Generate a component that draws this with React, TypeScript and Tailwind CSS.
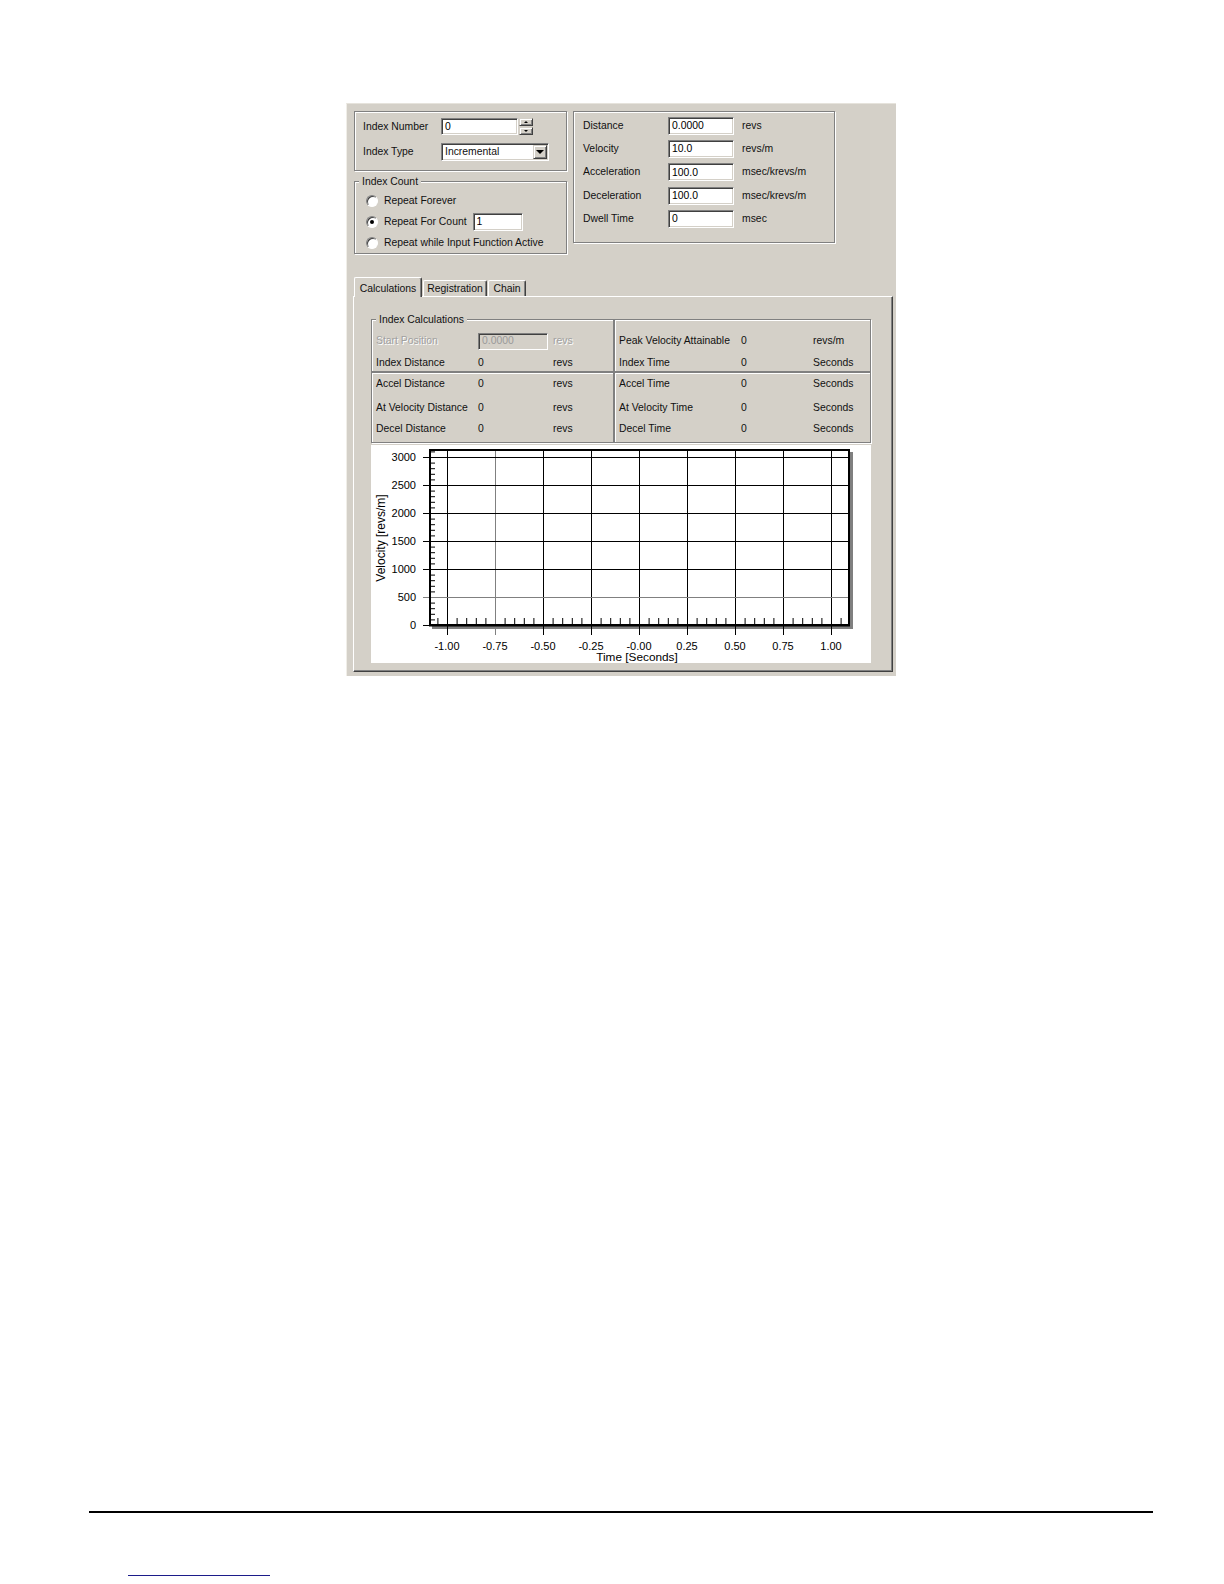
import React from 'react';

const etched =
  'border border-[#808080] shadow-[inset_1px_1px_0_#ffffff,1px_1px_0_#ffffff]';
const sunken =
  'border border-[#808080] border-r-white border-b-white shadow-[inset_1px_1px_0_#404040,inset_-1px_-1px_0_#d4d0c8]';
const raised =
  'border border-[#d4d0c8] border-r-[#404040] border-b-[#404040] shadow-[inset_1px_1px_0_#ffffff,inset_-1px_-1px_0_#808080]';

const TextBox: React.FC<{ value: string; className?: string; disabled?: boolean }> = ({
  value,
  className = '',
  disabled,
}) => (
  <div
    className={`flex items-center pl-[3px] pt-[1px] leading-none ${sunken} ${
      disabled ? 'bg-[#d4d0c8] text-[#9a9a9a]' : 'bg-white text-black'
    } ${className}`}
  >
    {value}
  </div>
);

const Radio: React.FC<{ checked?: boolean; label: string }> = ({ checked, label }) => (
  <div className="flex h-[21px] items-center">
    <span className="ml-[11px] flex h-[12px] w-[12px] shrink-0 items-center justify-center rounded-full border border-[#808080] border-r-white border-b-white bg-white shadow-[inset_1px_1px_0_#404040]">
      {checked && <span className="h-[4px] w-[4px] rounded-full bg-black" />}
    </span>
    <span className="ml-[6px]">{label}</span>
  </div>
);

const Cell: React.FC<{
  rows: { label: string; value: string; unit: string; disabled?: boolean; mt: string }[];
  cols: [string, string];
  className: string;
  title?: string;
}> = ({ rows, cols, className, title }) => (
  <div className={`relative ${etched} ${className}`}>
    {title && (
      <span className="absolute -top-[7px] left-[4px] bg-[#d4d0c8] px-[3px] leading-[13px]">
        {title}
      </span>
    )}
    {rows.map(r => (
      <div key={r.label} className={`flex h-[16px] items-center pl-[4px] ${r.mt}`}>
        <span className={`${cols[0]} ${r.disabled ? 'text-[#a0a0a0] [text-shadow:1px_1px_0_#ffffff]' : ''}`}>
          {r.label}
        </span>
        {r.disabled ? (
          <TextBox value={r.value} disabled className="h-[17px] w-[70px]" />
        ) : (
          <span className={cols[1]}>{r.value}</span>
        )}
        <span
          className={`${r.disabled ? 'ml-[5px] text-[#a0a0a0] [text-shadow:1px_1px_0_#ffffff]' : ''}`}
        >
          {r.unit}
        </span>
      </div>
    ))}
  </div>
);

const Chart = () => {
  const xPos = (v: number) => 268 + v * 192;
  const yPos = (v: number) => 180 - (v / 500) * 28;
  const xVals = [-1, -0.75, -0.5, -0.25, 0, 0.25, 0.5, 0.75, 1];
  const xLabels = ['-1.00', '-0.75', '-0.50', '-0.25', '-0.00', '0.25', '0.50', '0.75', '1.00'];
  const yVals = [0, 500, 1000, 1500, 2000, 2500, 3000];
  const minorX: number[] = [];
  for (let k = -1; k <= 41; k++) if (k % 5 !== 0) minorX.push(76 + k * 9.6);
  const minorY: number[] = [];
  for (let j = 1; j <= 31; j++) if (j % 5 !== 0) minorY.push(180 - j * 5.6);

  return (
    <svg width="500" height="218" viewBox="0 0 500 218" className="block">
      <rect x="0" y="0" width="500" height="218" fill="#ffffff" />
      <rect x="61" y="7" width="421" height="177" fill="#808080" />
      <rect x="58" y="4" width="421" height="176" fill="#ffffff" />
      {xVals.map(v => (
        <line
          key={`gx${v}`}
          x1={xPos(v) + 0.5}
          x2={xPos(v) + 0.5}
          y1="4"
          y2="190"
          stroke={v === -0.75 ? '#808080' : '#000000'}
          strokeWidth="1"
        />
      ))}
      {yVals.map(v => (
        <line
          key={`gy${v}`}
          x1="52"
          x2="479"
          y1={yPos(v) + 0.5}
          y2={yPos(v) + 0.5}
          stroke={v === 500 ? '#808080' : '#000000'}
          strokeWidth="1"
        />
      ))}
      {minorX.map(x => (
        <line key={`mx${x}`} x1={x + 0.5} x2={x + 0.5} y1="173" y2="180" stroke="#000" strokeWidth="1" />
      ))}
      {minorY.map(y => (
        <line key={`my${y}`} x1="58" x2="64" y1={y + 0.5} y2={y + 0.5} stroke="#000" strokeWidth="1" />
      ))}
      <rect x="59" y="5" width="419" height="175" fill="none" stroke="#000" strokeWidth="2" />
      <line x1="58" x2="479" y1="180.5" y2="180.5" stroke="#000" strokeWidth="2" />
      <g fontFamily='"Liberation Sans", Arial, sans-serif' fontSize="11" fill="#000">
        {yVals.map(v => (
          <text key={`ly${v}`} x="45" y={yPos(v) + 4} textAnchor="end">
            {v}
          </text>
        ))}
        {xVals.map((v, i) => (
          <text key={`lx${v}`} x={xPos(v)} y="205" textAnchor="middle">
            {xLabels[i]}
          </text>
        ))}
        <text x="266" y="216" textAnchor="middle" fontSize="11.8">
          Time [Seconds]
        </text>
        <text x="14" y="93" textAnchor="middle" fontSize="12" transform="rotate(-90 14 93)">
          Velocity [revs/m]
        </text>
      </g>
    </svg>
  );
};

const motion = [
  { label: 'Distance', value: '0.0000', unit: 'revs' },
  { label: 'Velocity', value: '10.0', unit: 'revs/m' },
  { label: 'Acceleration', value: '100.0', unit: 'msec/krevs/m' },
  { label: 'Deceleration', value: '100.0', unit: 'msec/krevs/m' },
  { label: 'Dwell Time', value: '0', unit: 'msec' },
];

export default function App() {
  return (
    <div className="relative h-[1584px] w-[1224px] overflow-hidden bg-white font-['Liberation_Sans',Arial,sans-serif] text-[10.4px] text-[#111111]">
      <div className="ml-[346px] mt-[103px] h-[573px] w-[550px] border-l border-t border-l-[#f0eee8] border-t-[#e6e3dc] bg-[#d4d0c8]">
        {/* top groups */}
        <div className="ml-[7px] mt-[7px] flex gap-[6px]">
          <div className="w-[213px]">
            <div className={`h-[60px] pl-[8px] pt-[6px] ${etched}`}>
              <div className="flex h-[17px] items-center">
                <span className="w-[78px]">Index Number</span>
                <TextBox value="0" className="h-[17px] w-[77px]" />
                <div className="ml-[1px] flex h-[17px] w-[14px] flex-col">
                  <div className={`flex h-[8px] items-center justify-center bg-[#d4d0c8] ${raised}`}>
                    <span className="h-0 w-0 border-x-[2px] border-b-[2px] border-x-transparent border-b-black" />
                  </div>
                  <div className={`mt-[1px] flex h-[8px] items-center justify-center bg-[#d4d0c8] ${raised}`}>
                    <span className="h-0 w-0 border-x-[2px] border-t-[2px] border-x-transparent border-t-black" />
                  </div>
                </div>
              </div>
              <div className="mt-[8px] flex h-[17px] items-center">
                <span className="w-[78px]">Index Type</span>
                <div className={`flex h-[18px] w-[108px] items-center bg-white pl-[3px] ${sunken}`}>
                  <span className="flex-1 pt-[1px]">Incremental</span>
                  <div className={`mr-[1px] flex h-[14px] w-[14px] items-center justify-center bg-[#d4d0c8] ${raised}`}>
                    <span className="h-0 w-0 border-x-[4px] border-t-[4px] border-x-transparent border-t-black" />
                  </div>
                </div>
              </div>
            </div>
            <div className={`relative mt-[10px] h-[73px] pt-[8px] ${etched}`}>
              <span className="absolute -top-[7px] left-[4px] bg-[#d4d0c8] px-[3px] leading-[13px]">
                Index Count
              </span>
              <Radio label="Repeat Forever" />
              <div className="flex items-center">
                <Radio checked label="Repeat For Count" />
                <TextBox value="1" className="ml-[6px] h-[18px] w-[50px]" />
              </div>
              <Radio label="Repeat while Input Function Active" />
            </div>
          </div>

          <div className={`h-[132px] w-[262px] pl-[9px] pt-[5px] ${etched}`}>
            {motion.map((m, i) => (
              <div key={m.label} className={`flex h-[17px] items-center ${i > 0 ? 'mt-[6.4px]' : ''}`}>
                <span className="w-[85px]">{m.label}</span>
                <TextBox value={m.value} className="h-[18px] w-[66px]" />
                <span className="ml-[8px]">{m.unit}</span>
              </div>
            ))}
          </div>
        </div>

        {/* tabs */}
        <div className="ml-[6px] mt-[23px] flex items-end">
          <div className="relative z-10 -mb-[1px] ml-[1px] flex h-[20px] w-[68px] items-start justify-center rounded-t-[2px] border-l border-t border-r border-l-white border-t-white border-r-[#404040] bg-[#d4d0c8] pt-[3px] shadow-[inset_-1px_0_0_#808080]">
            Calculations
          </div>
          <div className="ml-[1px] flex h-[16px] w-[64px] items-center justify-center rounded-t-[2px] border-l border-t border-r border-l-white border-t-white border-r-[#404040] shadow-[inset_-1px_0_0_#808080]">
            Registration
          </div>
          <div className="ml-[1px] flex h-[16px] w-[38px] items-center justify-center rounded-t-[2px] border-l border-t border-r border-l-white border-t-white border-r-[#404040] shadow-[inset_-1px_0_0_#808080]">
            Chain
          </div>
        </div>
        <div className="ml-[6px] h-[376px] w-[540px] border border-l-white border-t-white border-r-[#404040] border-b-[#404040] pl-[17px] pt-[22px] shadow-[inset_-1px_-1px_0_#808080]">
          <div className="grid w-[500px] grid-cols-[243px_257px] grid-rows-[53px_71px]">
            <Cell
              title="Index Calculations"
              className="pt-[13px]"
              cols={['w-[102px]', 'w-[75px]']}
              rows={[
                { label: 'Start Position', value: '0.0000', unit: 'revs', disabled: true, mt: '' },
                { label: 'Index Distance', value: '0', unit: 'revs', mt: 'mt-[6px]' },
              ]}
            />
            <Cell
              className="pt-[13px]"
              cols={['w-[122px]', 'w-[72px]']}
              rows={[
                { label: 'Peak Velocity Attainable', value: '0', unit: 'revs/m', mt: '' },
                { label: 'Index Time', value: '0', unit: 'Seconds', mt: 'mt-[6px]' },
              ]}
            />
            <Cell
              className="pt-[3px]"
              cols={['w-[102px]', 'w-[75px]']}
              rows={[
                { label: 'Accel Distance', value: '0', unit: 'revs', mt: '' },
                { label: 'At Velocity Distance', value: '0', unit: 'revs', mt: 'mt-[8px]' },
                { label: 'Decel Distance', value: '0', unit: 'revs', mt: 'mt-[5px]' },
              ]}
            />
            <Cell
              className="pt-[3px]"
              cols={['w-[122px]', 'w-[72px]']}
              rows={[
                { label: 'Accel Time', value: '0', unit: 'Seconds', mt: '' },
                { label: 'At Velocity Time', value: '0', unit: 'Seconds', mt: 'mt-[8px]' },
                { label: 'Decel Time', value: '0', unit: 'Seconds', mt: 'mt-[5px]' },
              ]}
            />
          </div>
          <div className="mt-[2px] w-[500px]">
            <Chart />
          </div>
        </div>
      </div>

      {/* page footer rules */}
      <div className="ml-[89px] mt-[835px] h-[2px] w-[1064px] bg-black" />
      <div className="ml-[128px] mt-[62px] h-[1px] w-[142px] bg-[#1c1c8a]" />
    </div>
  );
}
